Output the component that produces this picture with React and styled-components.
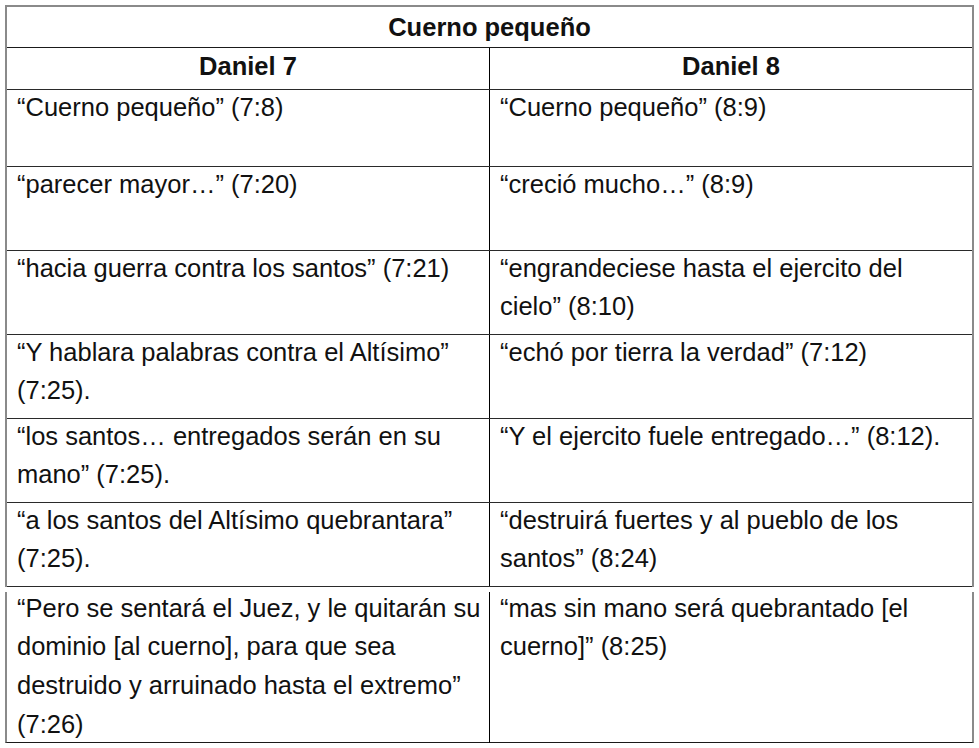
import React from "react";
import styled, { createGlobalStyle } from "styled-components";

const Global = createGlobalStyle`
  html, body { margin: 0; padding: 0; background: #fff; }
  body { font-family: "Liberation Sans", Arial, sans-serif; color: #111; }
`;

const Page = styled.div`
  width: 979px;
  height: 748px;
  box-sizing: border-box;
  padding: 5px 0 0 5px;
  background: #fff;
`;

const Table = styled.section`
  width: 969px;
  box-sizing: border-box;
  border-left: 2px solid #8a8a8a;
  border-right: 2px solid #8a8a8a;
  border-top: ${(p) => (p.$top ? "2px solid #8a8a8a" : "none")};
  border-bottom: ${(p) => (p.$bottom ? "1px solid #1a1a1a" : "none")};
  margin-top: ${(p) => p.$gap || 0}px;
`;

const TitleRow = styled.div`
  height: 40px;
  border-bottom: 1px solid #1a1a1a;
  text-align: center;
  font-weight: bold;
  font-size: 25.5px;
  line-height: 40px;
`;

const Row = styled.div`
  display: grid;
  grid-template-columns: 482px 1fr;
  height: ${(p) => p.$h}px;
  border-bottom: ${(p) => (p.$noLine ? "none" : "1px solid #2a2a2a")};
`;

const Cell = styled.div`
  box-sizing: border-box;
  padding: 0 6px 0 10px;
  border-left: ${(p) => (p.$divider ? "1px solid #000" : "none")};
  min-width: 0;
`;

const HeadCell = styled(Cell)`
  text-align: center;
  font-weight: bold;
  font-size: 25.5px;
  line-height: 37px;
  padding: 0;
`;

const Text = styled.p`
  margin: ${(p) => p.$shift}px 0 0;
  font-size: 25.5px;
  line-height: 38.7px;
`;

const rows = [
  { h: 76, l: "“Cuerno pequeño” (7:8)", r: "“Cuerno pequeño” (8:9)" },
  { h: 83, l: "“parecer mayor…” (7:20)", r: "“creció mucho…” (8:9)" },
  {
    h: 83,
    l: "“hacia guerra contra los santos” (7:21)",
    r: "“engrandeciese hasta el ejercito del cielo” (8:10)",
  },
  {
    h: 83,
    l: "“Y hablara palabras contra el Altísimo” (7:25).",
    r: "“echó por tierra la verdad” (7:12)",
  },
  {
    h: 83,
    l: "“los santos… entregados serán en su mano” (7:25).",
    r: "“Y el ejercito fuele entregado…” (8:12).",
  },
  {
    h: 83,
    l: "“a los santos del Altísimo quebrantara” (7:25).",
    r: "“destruirá fuertes y al pueblo de los santos” (8:24)",
  },
];

const last = {
  l: "“Pero se sentará el Juez, y le quitarán su dominio [al cuerno], para que sea destruido y arruinado hasta el extremo” (7:26)",
  r: "“mas sin mano será quebrantado [el cuerno]” (8:25)",
};

export default function App() {
  return (
    <>
      <Global />
      <Page>
        <Table $top>
          <TitleRow>Cuerno pequeño</TitleRow>
          <Row $h={41}>
            <HeadCell>Daniel 7</HeadCell>
            <HeadCell $divider>Daniel 8</HeadCell>
          </Row>
          {rows.map((r, i) => (
            <Row key={i} $h={r.h}>
              <Cell>
                <Text $shift={-2.5}>{r.l}</Text>
              </Cell>
              <Cell $divider>
                <Text $shift={-2.5}>{r.r}</Text>
              </Cell>
            </Row>
          ))}
        </Table>
        <Table $bottom $gap={5}>
          <Row $h={150} $noLine>
            <Cell>
              <Text $shift={-3.5}>{last.l}</Text>
            </Cell>
            <Cell $divider>
              <Text $shift={-3.5}>{last.r}</Text>
            </Cell>
          </Row>
        </Table>
      </Page>
    </>
  );
}
